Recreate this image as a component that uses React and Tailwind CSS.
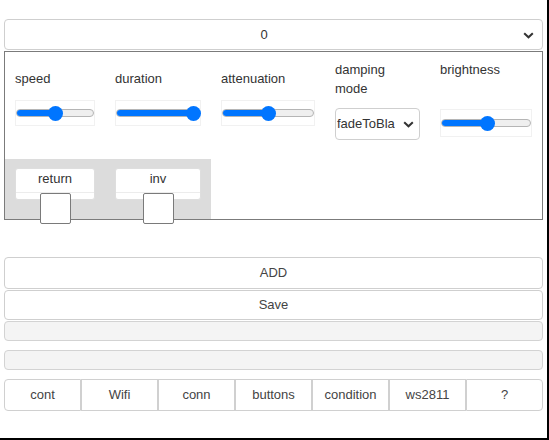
import React from "react";

function Chevron() {
  return (
    <svg width="11" height="7" viewBox="0 0 11 7" className="block">
      <path d="M1.2 1.2 L5.5 5.3 L9.8 1.2" fill="none" stroke="#333" strokeWidth="2" />
    </svg>
  );
}

function Slider({ width, pct, height }) {
  const thumbLeft = (width - 16) * pct;
  return (
    <div
      className="border border-[#f1f1f1] bg-white flex items-center"
      style={{ width: width, height: height }}
    >
      <div className="relative w-full h-[16px] flex items-center">
        <div className="w-full h-[8px] rounded-full bg-[#efefef] border border-[#b5b5b5] overflow-hidden">
          <div className="h-full bg-[#0075ff]" style={{ width: thumbLeft + 8 }} />
        </div>
        <div
          className="absolute top-[0.5px] w-[15px] h-[15px] rounded-full bg-[#0075ff]"
          style={{ left: thumbLeft }}
        />
      </div>
    </div>
  );
}

function CheckCell({ label, width, padLeft }) {
  return (
    <div className="flex flex-col items-center pt-[9px]" style={{ width: width, marginLeft: padLeft }}>
      <div className="w-full h-[32px] bg-white border border-[#dedede] rounded-[3px]">
        <div className="h-[24px] leading-[20px] text-center border-b border-[#ececec] text-[#333]">
          {label}
        </div>
      </div>
      <div className="-mt-[7px] w-[31px] h-[31px] bg-white border border-[#7a7a7a] rounded-[2px]" />
    </div>
  );
}

export default function App() {
  return (
    <div className="w-[549px] h-[440px] border-r-2 border-b-2 border-black bg-white font-['Liberation_Sans',Arial,sans-serif] text-[13px] text-[#333]">
      <div className="w-[539px] ml-[4px] pt-[19px]">
        <div className="h-[31px] border border-[#cfcfcf] rounded-[4px] bg-white flex items-center relative pr-[19px]">
          <div className="flex-1 text-center text-[#333]">0</div>
          <div className="absolute right-[8px] top-[12px]">
            <Chevron />
          </div>
        </div>

        <div className="mt-[1px] border border-[#7b7b7b]">
          <div className="h-[107px] flex items-start">
            <div className="pl-[10px] pr-[10px] pt-[17px]">
              <div className="leading-[19px]">speed</div>
              <div className="mt-[12px]">
                <Slider width={80} pct={0.5} height={26} />
              </div>
            </div>
            <div className="pl-[10px] pr-[10px] pt-[17px]">
              <div className="leading-[19px]">duration</div>
              <div className="mt-[12px]">
                <Slider width={86} pct={1} height={26} />
              </div>
            </div>
            <div className="pl-[10px] pr-[10px] pt-[17px]">
              <div className="leading-[19px]">attenuation</div>
              <div className="mt-[12px]">
                <Slider width={94} pct={0.5} height={26} />
              </div>
            </div>
            <div className="pl-[10px] pr-[10px] pt-[8px] w-[105px]">
              <div className="leading-[19px]">
                damping
                <br />
                mode
              </div>
              <div className="mt-[10px] w-[85px] h-[32px] border border-[#cfcfcf] rounded-[4px] bg-white flex items-center pl-[1px] overflow-hidden">
                <div className="w-[58px] overflow-hidden whitespace-nowrap text-[#333]">fadeToBla</div>
                <div className="ml-[8px]">
                  <Chevron />
                </div>
              </div>
            </div>
            <div className="pl-[10px] pr-[10px] pt-[8px]">
              <div className="leading-[19px]">brightness</div>
              <div className="mt-[30px]">
                <Slider width={92} pct={0.51} height={28} />
              </div>
            </div>
          </div>

          <div className="w-[206px] h-[60px] bg-[#dcdcdc] flex items-start">
            <CheckCell label="return" width={80} padLeft={10} />
            <CheckCell label="inv" width={86} padLeft={20} />
          </div>
        </div>

        <div className="mt-[37px] h-[32px] border border-[#cfcfcf] rounded-[4px] bg-white flex items-center justify-center text-[#444]">
          ADD
        </div>
        <div className="mt-[1px] h-[30px] border border-[#cfcfcf] rounded-[4px] bg-white flex items-center justify-center text-[#444]">
          Save
        </div>
        <div className="mt-[1px] h-[20px] border border-[#d3d3d3] rounded-[4px] bg-[#f4f4f4]" />
        <div className="mt-[9px] h-[20px] border border-[#d3d3d3] rounded-[4px] bg-[#f4f4f4]" />

        <div className="mt-[9px] h-[32px] flex">
          {["cont", "Wifi", "conn", "buttons", "condition", "ws2811", "?"].map((t, i) => (
            <div
              key={t}
              className={
                "flex-1 border border-[#d0d0d0] bg-white flex items-center justify-center text-[#444] " +
                (i === 0 ? "rounded-l-[4px]" : i === 6 ? "rounded-r-[4px]" : "")
              }
            >
              {t}
            </div>
          ))}
        </div>
      </div>
    </div>
  );
}
